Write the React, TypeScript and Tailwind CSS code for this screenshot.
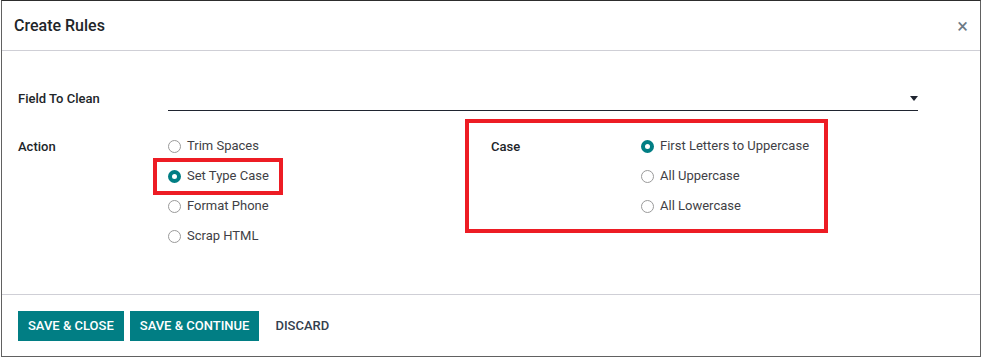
import React from 'react';

const TEAL = 'bg-[#017e84]';

type RadioProps = { label: string; checked?: boolean };

const Radio: React.FC<RadioProps> = ({ label, checked = false }) => (
  <div className="flex h-[30px] items-center">
    {checked ? (
      <span className="box-border block h-[13px] w-[13px] rounded-full border-[4px] border-[#017e84] bg-white" />
    ) : (
      <span className="box-border block h-[13px] w-[13px] rounded-full border border-[#9a9a9a] bg-white" />
    )}
    <span className="ml-[6px] text-[13px] text-[#3f3f46]">{label}</span>
  </div>
);

// marco rojo de anotación, dibujado encima del contenido
const Mark: React.FC<{ className: string }> = ({ className }) => (
  <span className={`pointer-events-none absolute border-[4px] border-[#ed1c24] ${className}`} />
);

export default function App() {
  return (
    <div className="h-[359px] w-[982px] bg-white font-['Roboto',sans-serif] text-[#212529]">
      <div className="ml-[1px] flex h-[357px] w-[980px] flex-col border border-[#616161] border-t-[#2d2d2d]">
        {/* Cabecera */}
        <div className="flex h-[50px] shrink-0 items-center justify-between border-b border-[#cfcfd6] pl-[12px] pr-[12px]">
          <h1 className="text-[16px] font-medium">Create Rules</h1>
          <span className="text-[20px] leading-none text-[#6c7a86]">×</span>
        </div>

        {/* Cuerpo */}
        <div className="h-[243px] shrink-0 pl-[16px] pt-[34px]">
          <div className="flex h-[26px] items-center">
            <div className="w-[150px] pt-[2px] text-[13px] font-medium">Field To Clean</div>
            <div className="relative flex h-full w-[750px] items-center justify-end border-b border-[#1f2430]">
              <svg width="8" height="5" viewBox="0 0 8 5" className="mt-[2px]">
                <path d="M0 0 L8 0 L4 5 Z" fill="#1f2430" />
              </svg>
            </div>
          </div>

          <div className="mt-[20px] flex">
            <div className="flex w-[473px]">
              <div className="w-[150px] pt-[6px] text-[13px] font-medium">Action</div>
              <div className="flex flex-col">
                <Radio label="Trim Spaces" />
                <div className="relative">
                  <Radio label="Set Type Case" checked />
                  <Mark className="-left-[15px] -top-[3px] h-[37px] w-[130px]" />
                </div>
                <Radio label="Format Phone" />
                <Radio label="Scrap HTML" />
              </div>
            </div>

            <div className="relative flex w-[420px]">
              <div className="w-[150px] pt-[6px] text-[13px] font-medium">Case</div>
              <div className="flex flex-col">
                <Radio label="First Letters to Uppercase" checked />
                <Radio label="All Uppercase" />
                <Radio label="All Lowercase" />
              </div>
              <Mark className="-left-[26px] -top-[12px] h-[114px] w-[363px]" />
            </div>
          </div>
        </div>

        {/* Pie */}
        <div className="flex flex-1 items-start gap-[6px] border-t border-[#cfcfd6] pl-[16px] pt-[16px]">
          <button className={`h-[30px] px-[10px] text-[13px] font-medium text-white ${TEAL}`}>SAVE &amp; CLOSE</button>
          <button className={`h-[30px] px-[10px] text-[13px] font-medium text-white ${TEAL}`}>SAVE &amp; CONTINUE</button>
          <button className="h-[30px] px-[10px] text-[13px] font-medium text-[#34404d]">DISCARD</button>
        </div>
      </div>
    </div>
  );
}
